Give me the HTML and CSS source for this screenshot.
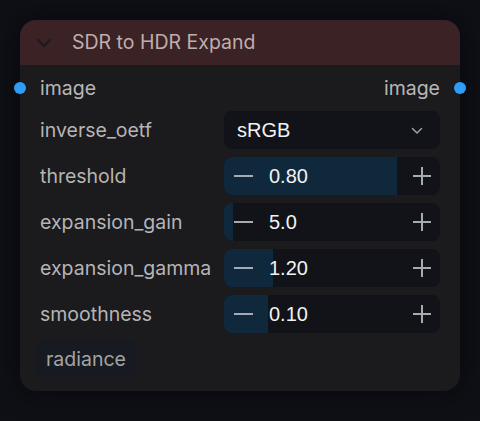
FILE: index.html
```html
<!DOCTYPE html>
<html>
<head>
<meta charset="utf-8">
<link rel="stylesheet" href="styles.css">
</head>
<body>
<div class="node">
  <div class="header">
    <svg class="collapse" width="16" height="10" viewBox="0 0 16 10"><path d="M2 2 L8 8 L14 2" fill="none" stroke="#1d1a20" stroke-width="2.2" stroke-linecap="round" stroke-linejoin="round"/></svg>
    <span class="title">SDR to HDR Expand</span>
  </div>
  <div class="body">
    <div class="slots">
      <span class="dot dot-in"></span>
      <span class="slot-label">image</span>
      <span class="slot-label">image</span>
      <span class="dot dot-out"></span>
    </div>
    <div class="row">
      <span class="label">inverse_oetf</span>
      <div class="widget combo">
        <span class="value">sRGB</span>
        <svg class="arrow" width="12" height="8" viewBox="0 0 12 8"><path d="M1.5 1.5 L6 6 L10.5 1.5" fill="none" stroke="#9aa0a8" stroke-width="1.5" stroke-linecap="round" stroke-linejoin="round"/></svg>
      </div>
    </div>
    <div class="row">
      <span class="label">threshold</span>
      <div class="widget num">
        <div class="fill" style="width:80%"></div>
        <span class="minus"></span>
        <span class="value">0.80</span>
        <span class="plus"></span>
      </div>
    </div>
    <div class="row">
      <span class="label">expansion_gain</span>
      <div class="widget num">
        <div class="fill" style="width:4.2%"></div>
        <span class="minus"></span>
        <span class="value">5.0</span>
        <span class="plus"></span>
      </div>
    </div>
    <div class="row">
      <span class="label">expansion_gamma</span>
      <div class="widget num">
        <div class="fill" style="width:22.7%"></div>
        <span class="minus"></span>
        <span class="value">1.20</span>
        <span class="plus"></span>
      </div>
    </div>
    <div class="row">
      <span class="label">smoothness</span>
      <div class="widget num">
        <div class="fill" style="width:20.4%"></div>
        <span class="minus"></span>
        <span class="value">0.10</span>
        <span class="plus"></span>
      </div>
    </div>
    <div class="footer">
      <span class="badge">radiance</span>
    </div>
  </div>
</div>
</body>
</html>
```
FILE: styles.css
```css
html, body {
  margin: 0;
  padding: 0;
}
body {
  width: 480px;
  height: 421px;
  background: #0e1016;
  font-family: Inter, "Liberation Sans", sans-serif;
  padding: 20px;
  box-sizing: border-box;
  overflow: hidden;
}
.node {
  position: relative;
  width: 440px;
  height: 371px;
  background: #1b1a1d;
  border-radius: 16px;
  box-shadow: 0 0 24px 6px rgba(0, 0, 0, 0.35);
}
.header {
  height: 45px;
  background: #3b2224;
  border-radius: 16px 16px 0 0;
  display: flex;
  align-items: center;
  padding-left: 16px;
  box-sizing: border-box;
}
.collapse {
  margin-right: 20px;
}
.title {
  color: #bfaeae;
  font-size: 19.5px;
  line-height: 1;
  padding-top: 1px;
}
.body {
  padding: 8px 20px 0 20px;
}
.slots {
  height: 30px;
  display: flex;
  align-items: center;
  justify-content: space-between;
  margin-bottom: 8px;
}
.slot-label {
  color: #b7b7b7;
  font-size: 19.5px;
}
.dot {
  position: absolute;
  width: 12px;
  height: 12px;
  border-radius: 50%;
  background: #2f9cf6;
  top: 62px;
}
.dot-in { left: -6px; }
.dot-out { right: -6px; }
.row {
  height: 38px;
  display: flex;
  align-items: center;
  margin-bottom: 8px;
}
.label {
  width: 184px;
  color: #b5b5b5;
  font-size: 19.5px;
  white-space: nowrap;
}
.widget {
  position: relative;
  width: 216px;
  height: 38px;
  background: #111318;
  border-radius: 8px;
  overflow: hidden;
  display: flex;
  align-items: center;
  box-sizing: border-box;
}
.value {
  position: relative;
  color: #f2f2f2;
  font-family: "Liberation Sans", Arial, sans-serif;
  font-size: 20px;
}
.combo {
  padding: 0 17px 0 13px;
  justify-content: space-between;
}
.combo .arrow {
  margin-top: 2px;
}
.fill {
  position: absolute;
  left: 0;
  top: 0;
  bottom: 0;
  background: #10283c;
}
.num .minus {
  position: relative;
  width: 19px;
  height: 2px;
  background: #a5abb2;
  margin: 0 16px 0 10px;
}
.num .value {
  flex: 1;
}
.num .plus {
  position: relative;
  width: 18px;
  height: 18px;
  margin-right: 9px;
}
.num .plus::before,
.num .plus::after {
  content: "";
  position: absolute;
  background: #a5abb2;
}
.num .plus::before {
  left: 0;
  right: 0;
  top: 8px;
  height: 2px;
}
.num .plus::after {
  top: 0;
  bottom: 0;
  left: 8px;
  width: 2px;
}
.footer {
  display: flex;
  margin-top: -1px;
}
.badge {
  background: #171a20;
  color: #a4a4a4;
  font-size: 19.5px;
  height: 37px;
  line-height: 38px;
  padding: 0 11px;
  border-radius: 10px;
  margin-left: -5px;
}
```
